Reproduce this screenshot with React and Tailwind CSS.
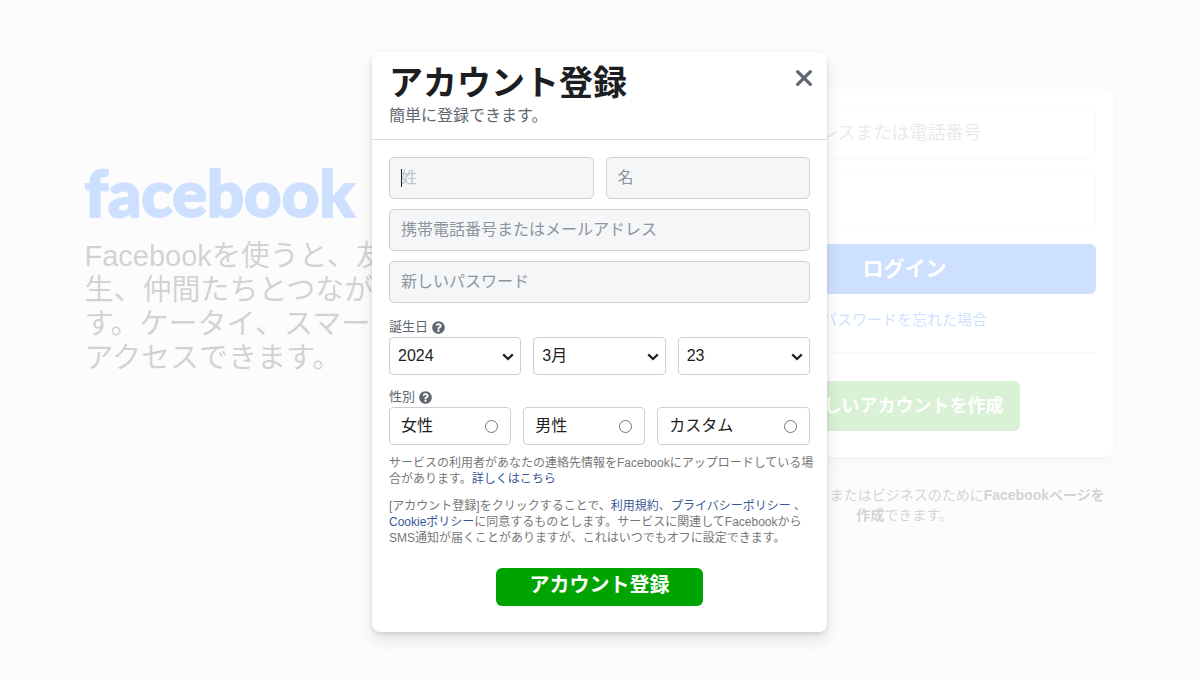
import { FaQuestionCircle } from "react-icons/fa";

const years = ["2024", "2023", "2022", "2021", "2020"];
const months = Array.from({ length: 12 }, (_, i) => `${i + 1}月`);
const days = Array.from({ length: 31 }, (_, i) => `${i + 1}`);

const fieldClass =
  "block w-full min-w-0 h-[42px] rounded-[5px] border border-[#ccd0d5] bg-[#f5f6f7] px-[11px] text-base text-[#1c1e21] outline-none";

function SelectBox({ label, options, value }) {
  return (
    <div className="relative">
      <select
        aria-label={label}
        defaultValue={value}
        className="block w-full h-[38px] appearance-none rounded-[4px] border border-[#ccd0d5] bg-white pl-2 pr-7 text-base leading-5 text-[#1c1e21]"
      >
        {options.map((o) => (
          <option key={o}>{o}</option>
        ))}
      </select>
      <svg
        viewBox="0 0 12 8"
        className="pointer-events-none absolute right-[7px] top-4 h-2 w-3"
        fill="none"
        stroke="#1c1e21"
        strokeWidth="2.2"
      >
        <path d="M1.2 1.4 L6 6 L10.8 1.4" />
      </svg>
    </div>
  );
}

function RadioBox({ label }) {
  return (
    <label className="flex h-[38px] items-center justify-between rounded-[4px] border border-[#ccd0d5] pl-[11px] pr-3 text-base text-[#1c1e21]">
      {label}
      <input
        type="radio"
        name="sex"
        className="h-[13px] w-[13px] appearance-none rounded-full border border-[#767676] bg-white checked:border-4 checked:border-[#0075ff]"
      />
    </label>
  );
}

function Legend({ children }) {
  return (
    <legend className="flex h-5 items-center gap-1 text-[13px] leading-5 text-[#606770]">
      {children}
      <button type="button" aria-label="詳しい情報">
        <FaQuestionCircle className="h-[13px] w-[13px] text-[#606770]" />
      </button>
    </legend>
  );
}

function LoginPage() {
  return (
    <div className="pr-[3px]">
      <div className="mx-auto flex w-full max-w-[1028px] justify-between pt-[89px]">
        {/* ロゴと紹介文 */}
        <div className="w-[520px] pt-[67px]">
          <h1 className="font-[Lato] text-[65px] font-black leading-[72px] text-[#0866ff] [-webkit-text-stroke:2px_#0866ff]">
            facebook
          </h1>
          <h2 className="pt-[11px] text-[29px] leading-[34px] text-[#1c1e21]">
            Facebookを使うと、友達や同僚、同級生、仲間たちとつながりを深められます。ケータイ、スマートフォンからも
            <br />
            アクセスできます。
          </h2>
        </div>

        {/* ログインフォーム */}
        <div className="w-[416px]">
          <form className="flex flex-col rounded-lg bg-white px-[17px] pb-[26px] pt-[17px] shadow-[0_2px_4px_rgba(0,0,0,0.1),0_8px_16px_rgba(0,0,0,0.1)]">
            <input
              type="text"
              aria-label="メールアドレスまたは電話番号"
              placeholder="メールアドレスまたは電話番号"
              className="h-[54px] rounded-md border border-[#dddfe2] px-[15px] text-lg placeholder:text-[#8d949e]"
            />
            <input
              type="password"
              aria-label="パスワード"
              placeholder="パスワード"
              className="mt-[13px] h-[54px] rounded-md border border-[#dddfe2] px-[15px] text-lg placeholder:text-[#8d949e]"
            />
            <button
              type="button"
              className="mt-[17px] h-[50px] rounded-md bg-[#0866ff] text-[21px] font-bold text-white"
            >
              ログイン
            </button>
            <a href="#" className="mt-4 text-center text-[15px] leading-5 text-[#0866ff]">
              パスワードを忘れた場合
            </a>
            <hr className="mt-[22px] border-[#dadde1]" />
            <button
              type="button"
              className="mx-auto mt-7 h-[50px] rounded-md bg-[#42b72a] px-4 text-lg font-bold text-white"
            >
              新しいアカウントを作成
            </button>
          </form>
          <p className="mt-7 text-center text-sm leading-5 text-[#1c1e21]">
            著名人、ブランド、またはビジネスのために
            <a href="#" className="font-bold">
              Facebookページを
              <br />
              作成
            </a>
            できます。
          </p>
        </div>
      </div>
    </div>
  );
}

function SignupDialog() {
  return (
    <div
      role="dialog"
      aria-labelledby="signup-title"
      className="w-full max-w-[455px] rounded-lg bg-white shadow-[0_2px_4px_rgba(0,0,0,0.1),0_8px_16px_rgba(0,0,0,0.1)]"
    >
      <div className="flex items-start justify-between border-b border-[#dadde1] px-[17px] pb-[11px] pt-[10px]">
        <div>
          <h2 id="signup-title" className="text-[34px] font-bold leading-[42px] text-[#1c1e21]">
            アカウント登録
          </h2>
          <p className="text-base leading-6 text-[#606770]">簡単に登録できます。</p>
        </div>
        <button type="button" aria-label="閉じる" className="-mr-2 mt-[2px] p-1">
          <svg
            viewBox="0 0 20 20"
            className="h-5 w-5"
            stroke="#606770"
            strokeWidth="3.2"
            strokeLinecap="round"
          >
            <path d="M3.6 3.6 L16.4 16.4 M16.4 3.6 L3.6 16.4" />
          </svg>
        </button>
      </div>

      <form className="px-[17px] pb-[26px] pt-[17px]">
        <div className="grid grid-cols-2 gap-x-3 gap-y-[10px]">
          <div className="relative">
            <input
              type="text"
              aria-label="姓"
              placeholder="姓"
              className={`${fieldClass} placeholder:text-[#bec3c9]`}
            />
            <span className="absolute left-3 top-3 h-[18px] w-px bg-[#1c1e21]" />
          </div>
          <input
            type="text"
            aria-label="名"
            placeholder="名"
            className={`${fieldClass} placeholder:text-[#8d949e]`}
          />
          <input
            type="text"
            aria-label="携帯電話番号またはメールアドレス"
            placeholder="携帯電話番号またはメールアドレス"
            className={`${fieldClass} col-span-2 placeholder:text-[#8d949e]`}
          />
          <input
            type="password"
            aria-label="新しいパスワード"
            placeholder="新しいパスワード"
            className={`${fieldClass} col-span-2 placeholder:text-[#8d949e]`}
          />
        </div>

        {/* 誕生日 */}
        <fieldset className="mt-[14px]">
          <Legend>誕生日</Legend>
          <div className="grid grid-cols-3 gap-3">
            <SelectBox label="年" options={years} value="2024" />
            <SelectBox label="月" options={months} value="3月" />
            <SelectBox label="日" options={days} value="23" />
          </div>
        </fieldset>

        {/* 性別 */}
        <fieldset className="mt-3">
          <Legend>性別</Legend>
          <div className="grid grid-cols-[4fr_4fr_5fr] gap-3">
            <RadioBox label="女性" />
            <RadioBox label="男性" />
            <RadioBox label="カスタム" />
          </div>
        </fieldset>

        <div className="mt-[10px] space-y-[11px] whitespace-nowrap text-xs leading-4 text-[#777777]">
          <p>
            サービスの利用者があなたの連絡先情報をFacebookにアップロードしている場
            <br />
            合があります。
            <a href="#" className="text-[#385898]">詳しくはこちら</a>
          </p>
          <p>
            [アカウント登録]をクリックすることで、
            <a href="#" className="text-[#385898]">利用規約</a>、
            <a href="#" className="text-[#385898]">プライバシーポリシー</a> 、
            <br />
            <a href="#" className="text-[#385898]">Cookieポリシー</a>
            に同意するものとします。サービスに関連してFacebookから
            <br />
            SMS通知が届くことがありますが、これはいつでもオフに設定できます。
          </p>
        </div>

        <button
          type="button"
          className="mx-auto mt-[22px] block h-[38px] w-[207px] rounded-md bg-[#00a400] pb-1 text-xl leading-6 font-bold text-white"
        >
          アカウント登録
        </button>
      </form>
    </div>
  );
}

export default function App() {
  return (
    <div
      lang="ja"
      className="relative min-h-screen overflow-hidden bg-[#f0f2f5] font-['Liberation_Sans','Noto_Sans_CJK_JP',sans-serif]"
    >
      <LoginPage />
      <div className="absolute inset-0 flex items-start justify-center bg-white/80 pr-px pt-13">
        <SignupDialog />
      </div>
    </div>
  );
}
